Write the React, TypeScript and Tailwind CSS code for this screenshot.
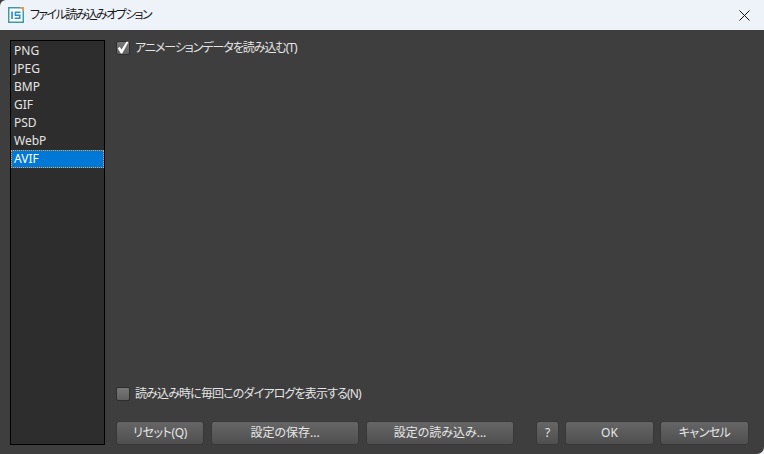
const FONT = "font-['Noto_Sans','Noto_Sans_CJK_JP',sans-serif] [font-feature-settings:'palt']";
const FORMATS = ["PNG", "JPEG", "BMP", "GIF", "PSD", "WebP", "AVIF"];

function Check({ on, label, track }: { on?: boolean; label: string; track: string }) {
  return (
    <label className="flex h-[14px] items-center gap-[5px]">
      <span className="relative h-[14px] w-[14px] shrink-0 rounded-[2px] border border-[#2e2e2e] bg-gradient-to-b from-[#787878] to-[#606060]">
        {on && (
          <svg viewBox="0 0 14 14" className="absolute -left-px -top-px h-[14px] w-[14px]">
            <path d="M1.8 7.6 L3.6 5.8 L5.6 8.4 L10.4 0.8 L12.6 0.8 L6.2 12.4 L4.9 12.4 Z" fill="#fff" />
          </svg>
        )}
      </span>
      <span className={`${track} text-[12px] leading-[14px] text-[#e4e4e4]`}>{label}</span>
    </label>
  );
}

function Btn({ w, label, track = "" }: { w: string; label: string; track?: string }) {
  return (
    <button
      type="button"
      className={`${w} ${track} h-[24px] shrink-0 rounded-[3px] border border-[#383838] bg-gradient-to-b from-[#666666] to-[#4f4f4f] text-center text-[12px] leading-[22px] text-[#e6e6e6]`}
    >
      {label}
    </button>
  );
}

export default function App() {
  return (
    <div className={`flex h-[454px] w-[764px] flex-col overflow-hidden bg-[#eef3f9] ${FONT}`}>
      {/* Title bar */}
      <div className="h-[30px] shrink-0 bg-[#3e3e3e]">
        <div className="flex h-full items-center rounded-tl-[6px] bg-[#eef3f9] pl-[8px] pr-[14px]">
          <svg viewBox="0 0 16 16" className="h-4 w-4 shrink-0">
            <rect x="0.75" y="0.75" width="14.5" height="14.5" fill="#fff" stroke="#3f9aa8" strokeWidth="1.5" />
            <path d="M11.5 0 H16 V4.5 Z" fill="#e39a4c" />
            <rect x="3.2" y="4.5" width="1.7" height="7.5" fill="#2b8fc4" />
            <path d="M12.5 5.3 H7.4 V8.2 H11.8 V11.3 H6.6" fill="none" stroke="#2b8fc4" strokeWidth="1.5" />
          </svg>
          <span className="ml-[6px] text-[12px] tracking-[-1.6px] text-[#1a1a1a]">ファイル読み込みオプション</span>
          <svg viewBox="0 0 11 11" className="ml-auto h-[11px] w-[11px]">
            <path d="M0.5 0.5 L10.5 10.5 M10.5 0.5 L0.5 10.5" stroke="#111" strokeWidth="1" />
          </svg>
        </div>
      </div>

      <div className="flex min-h-0 flex-1 rounded-br-[7px] bg-[#3e3e3e] pb-[9px] pl-[10px] pr-[14px] pt-[10px]">
        {/* Format list */}
        <ul className="w-[95px] shrink-0 border border-black bg-[#2d2d2d] py-[1px] text-[12px] leading-[18px] text-[#e4e4e4]">
          {FORMATS.map((f) =>
            f === "AVIF" ? (
              <li key={f} className="h-[18px] border border-dotted border-[#f0a040] bg-[#0078d7] pl-[2px] leading-[16px] text-white">
                {f}
              </li>
            ) : (
              <li key={f} className="h-[18px] pl-[3px]">
                {f}
              </li>
            ),
          )}
        </ul>

        <div className="ml-[11px] flex min-w-0 flex-1 flex-col pt-[1px]">
          <Check on track="tracking-[-1.05px]" label="アニメーションデータを読み込む(T)" />
          <div className="mt-auto">
            <Check track="tracking-[-0.85px]" label="読み込み時に毎回このダイアログを表示する(N)" />
          </div>
          <div className="mt-[20px] flex h-[24px]">
            <Btn w="w-[88px]" track="tracking-[-0.4px]" label="リセット(Q)" />
            <Btn w="ml-[7px] w-[148px]" label="設定の保存..." />
            <Btn w="ml-[7px] w-[148px]" label="設定の読み込み..." />
            <Btn w="ml-[22px] w-[23px]" label="?" />
            <Btn w="ml-[6px] w-[89px]" label="OK" />
            <Btn w="ml-[6px] w-[89px]" track="tracking-[-0.5px]" label="キャンセル" />
          </div>
        </div>
      </div>
    </div>
  );
}
